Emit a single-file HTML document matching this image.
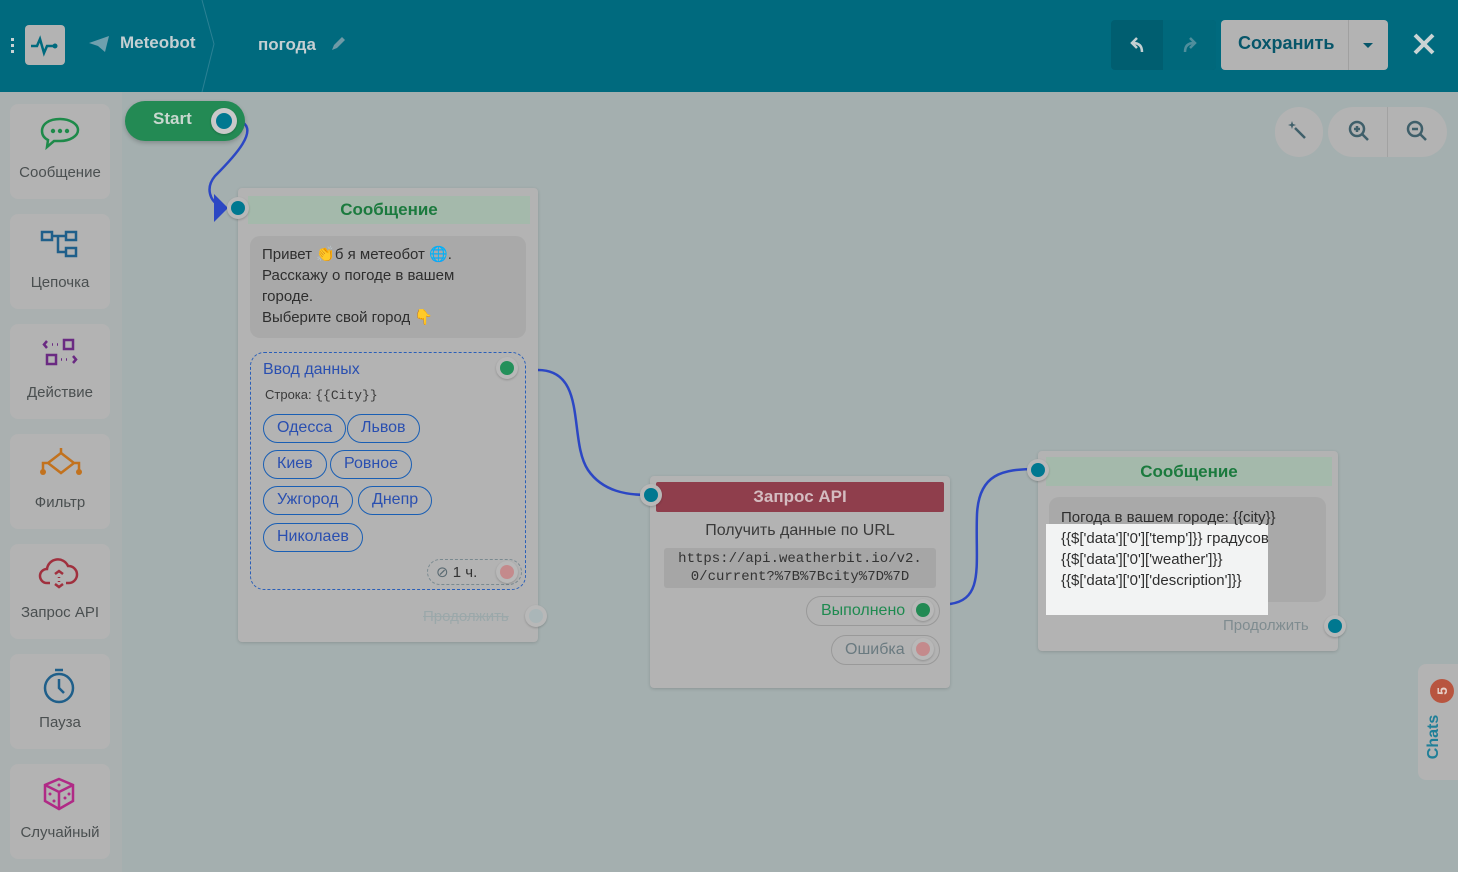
<!DOCTYPE html>
<html><head><meta charset="utf-8"><style>
*{box-sizing:border-box;margin:0;padding:0}
body{width:1458px;height:872px;overflow:hidden;background:#a4afaf;font-family:"Liberation Sans","DejaVu Sans",sans-serif;position:relative;color:#333}
.hdr{position:absolute;left:0;top:0;width:1458px;height:92px;background:#006a7e}
.side{position:absolute;left:0;top:92px;width:122px;height:780px;background:#aab0b0}
.card{position:absolute;left:10px;width:100px;height:95px;background:#b3b3b3;border-radius:8px;text-align:center;font-size:15px;color:#4a4f50}
.card svg{position:absolute;left:28px;top:12px}
.card span{position:absolute;left:0;right:0;top:60px}
.abs{position:absolute}
.node{position:absolute;background:#b3b3b3;border-radius:4px;box-shadow:0 1px 3px rgba(0,0,0,.15)}
.nh{position:absolute;text-align:center;font-weight:bold;font-size:17px}
.dot{position:absolute;width:22px;height:22px;border-radius:50%;background:#b8b8b8;box-shadow:0 1px 2px rgba(0,0,0,.2)}
.dot i{position:absolute;left:4px;top:4px;width:14px;height:14px;border-radius:50%}
.chip{position:absolute;height:29px;border:1.5px solid #1a5fb4;border-radius:15px;color:#2a4fb0;font-size:16px;line-height:26px;padding:0 13px}
</style></head><body>
<div class="hdr">
 <div class="abs" style="left:11px;top:38px;width:3px;height:3px;background:#c8d2d4;box-shadow:0 6px #c8d2d4,0 12px #c8d2d4"></div>
 <div class="abs" style="left:25px;top:25px;width:40px;height:40px;background:#b3b3b3;border-radius:4px">
  <svg width="40" height="40"><path d="M6 21h6l3-7 4 14 3-7h6" stroke="#006a7e" stroke-width="2.5" fill="none"/><circle cx="30" cy="21" r="2.5" fill="#006a7e"/></svg></div>
 <svg class="abs" style="left:88px;top:34px" width="22" height="20"><path d="M1 9L21 2 17 18 10 12z" fill="#6fa0ae"/></svg>
 <div class="abs" style="left:120px;top:33px;color:#c4cfd2;font-weight:bold;font-size:17px">Meteobot</div>
 <svg class="abs" style="left:200px;top:0" width="40" height="92"><path d="M2 0L14 44 2 92" stroke="#2b8194" fill="none"/></svg>
 <div class="abs" style="left:258px;top:35px;color:#c4cfd2;font-weight:bold;font-size:17px">погода</div>
 <svg class="abs" style="left:330px;top:36px" width="16" height="16"><path d="M2 14l2-5 8-8 3 3-8 8z" fill="#6f9aa6"/></svg>
 <div class="abs" style="left:1111px;top:20px;width:105px;height:50px;background:#005e70;border-radius:4px">
  <div class="abs" style="left:52px;top:0;width:53px;height:50px;background:#00687b;border-radius:0 4px 4px 0"></div>
  <svg class="abs" style="left:16px;top:13px" width="22" height="24"><path d="M15 19c0-6-3-9-9-9M10 5L5 10l5 5" stroke="#c4d0d2" stroke-width="2.5" fill="none"/></svg>
  <svg class="abs" style="left:68px;top:13px" width="22" height="24"><path d="M6 19c0-6 3-9 9-9M11 5l5 5-5 5" stroke="#4f8e9c" stroke-width="2.5" fill="none"/></svg>
 </div>
 <div class="abs" style="left:1221px;top:20px;width:167px;height:50px;background:#b3b3b3;border-radius:4px">
  <div class="abs" style="left:17px;top:13px;font-size:18px;font-weight:bold;color:#07566a">Сохранить</div>
  <div class="abs" style="left:127px;top:0;width:1px;height:50px;background:#a0a0a0"></div>
  <div class="abs" style="left:142px;top:23px;border:5px solid transparent;border-top:5px solid #07566a"></div>
 </div>
 <svg class="abs" style="left:1412px;top:32px" width="24" height="24"><path d="M3 3l18 18M21 3L3 21" stroke="#c9d3d4" stroke-width="4"/></svg>
</div>
<div class="side">
 <div class="card" style="top:12px"><svg width="44" height="36"><path d="M22 3C11 3 4 8 4 15c0 4 2 7 6 9l-1 7 7-6h6c10 0 18-5 18-11S32 3 22 3z" stroke="#1e8a4a" stroke-width="2.5" fill="none"/><circle cx="15" cy="15" r="2.2" fill="#1e8a4a"/><circle cx="22" cy="15" r="2.2" fill="#1e8a4a"/><circle cx="29" cy="15" r="2.2" fill="#1e8a4a"/></svg><span>Сообщение</span></div>
 <div class="card" style="top:122px"><svg width="44" height="36"><g stroke="#1f5f8a" stroke-width="2.5" fill="none"><rect x="4" y="6" width="10" height="8"/><rect x="28" y="6" width="10" height="8"/><rect x="28" y="22" width="10" height="8"/><path d="M14 10h14M20 10v16h8"/></g></svg><span>Цепочка</span></div>
 <div class="card" style="top:232px"><svg width="44" height="36"><g stroke="#6a2a82" stroke-width="2.5" fill="none"><rect x="26" y="4" width="9" height="9"/><rect x="9" y="19" width="9" height="9"/><path d="M9 5l-3 3.5 3 3.5M35 20l3 3.5-3 3.5M14 8.5h1M19 8.5h1M23 23.5h1M28 23.5h1"/></g></svg><span>Действие</span></div>
 <div class="card" style="top:342px"><svg width="46" height="36"><g stroke="#c2721e" stroke-width="2.5" fill="none"><path d="M23 2v5M23 7L10 17l13 10 13-10zM10 17H5v8M36 17h5v8"/></g><circle cx="5" cy="26" r="3" fill="#c2721e"/><circle cx="41" cy="26" r="3" fill="#c2721e"/></svg><span>Фильтр</span></div>
 <div class="card" style="top:452px"><svg width="44" height="38"><g stroke="#a0303e" stroke-width="2.5" fill="none"><path d="M12 27H9a7 7 0 010-14 11 11 0 0121-3 8 8 0 011 17h-3"/><path d="M17 18l4-3 4 3M17 28l4 3 4-3M21 21v1M21 25v1"/></g></svg><span>Запрос API</span></div>
 <div class="card" style="top:562px"><svg width="44" height="38"><g stroke="#1f5f8a" stroke-width="2.5" fill="none"><circle cx="21" cy="22" r="14"/><path d="M21 13v9l5 5M17 4h8"/></g></svg><span>Пауза</span></div>
 <div class="card" style="top:672px"><svg width="44" height="38"><g stroke="#b02a86" stroke-width="2.5" fill="none"><path d="M21 3l14 6v16l-14 8-14-8V9z M7 9l14 7 14-7M21 16v17"/></g><circle cx="21" cy="9" r="1.5" fill="#b02a86"/><circle cx="12" cy="18" r="1.5" fill="#b02a86"/><circle cx="16" cy="25" r="1.5" fill="#b02a86"/><circle cx="27" cy="22" r="1.5" fill="#b02a86"/><circle cx="31" cy="18" r="1.5" fill="#b02a86"/></svg><span>Случайный</span></div>
</div>
<svg class="abs" style="left:0;top:0" width="1458" height="872"><g stroke="#2c47c4" stroke-width="2.5" fill="none">
<path d="M240 121c20 8-5 35-25 55-10 12-5 25 5 30"/>
<path d="M538 370c50 0 30 70 50 100 15 22 40 25 60 25"/>
<path d="M950 604c35-5 25-40 27-90 2-40 25-45 60-45"/></g>
<path d="M214 194l14 14-14 14z" fill="#2c47c4"/></svg>
<div class="abs" style="left:125px;top:101px;width:120px;height:40px;background:#238a54;border-radius:20px;box-shadow:0 2px 4px rgba(0,0,0,.2)">
 <div class="abs" style="left:28px;top:8px;color:#c8d8cf;font-weight:bold;font-size:17px">Start</div>
 <div class="dot" style="left:86px;top:7px;width:26px;height:26px;background:#c9c9c9"><i style="left:5px;top:5px;width:16px;height:16px;background:#007890"></i></div>
</div>
<div class="abs" style="left:1275px;top:107px;width:48px;height:50px;border-radius:25px;background:#b3b3b3">
 <svg class="abs" style="left:12px;top:13px" width="24" height="24"><path d="M8 8l10 10" stroke="#3f5f6a" stroke-width="2.5"/><path d="M5 1l1 3 3 1-3 1-1 3-1-3-3-1 3-1z" fill="#3f5f6a"/></svg></div>
<div class="abs" style="left:1328px;top:107px;width:119px;height:50px;border-radius:25px;background:#b3b3b3">
 <div class="abs" style="left:59px;top:0;width:1px;height:50px;background:#a2a2a2"></div>
 <svg class="abs" style="left:20px;top:13px" width="24" height="24"><circle cx="9" cy="9" r="7" stroke="#3f5f6a" stroke-width="2.5" fill="none"/><path d="M14 14l6 6M6 9h6M9 6v6" stroke="#3f5f6a" stroke-width="2.5"/></svg>
 <svg class="abs" style="left:78px;top:13px" width="24" height="24"><circle cx="9" cy="9" r="7" stroke="#3f5f6a" stroke-width="2.5" fill="none"/><path d="M14 14l6 6M6 9h6" stroke="#3f5f6a" stroke-width="2.5"/></svg>
</div>
<div class="node" style="left:238px;top:188px;width:300px;height:454px">
 <div class="nh" style="left:10px;top:8px;width:282px;height:28px;background:#a4b9ab;color:#1b7a3e;line-height:28px">Сообщение</div>
 <div class="abs" style="left:12px;top:48px;width:276px;height:102px;background:#a9a9a9;border-radius:10px;padding:8px 12px;font-size:15px;line-height:21px;color:#2e2e2e;white-space:nowrap">Привет 👏б я метеобот 🌐.<br>Расскажу о погоде в вашем<br>городе.<br>Выберите свой город 👇</div>
 <div class="abs" style="left:12px;top:164px;width:276px;height:238px;border:1.5px dashed #2a5fb8;border-radius:14px">
  <div class="abs" style="left:12px;top:8px;color:#2a4fb0;font-size:16px">Ввод данных</div>
  <div class="abs" style="left:14px;top:34px;font-size:13px;color:#3a3a3a">Строка: <span style="font-family:'Liberation Mono',monospace">{{City}}</span></div>
  <div class="chip" style="left:12px;top:61px">Одесса</div>
  <div class="chip" style="left:96px;top:61px">Львов</div>
  <div class="chip" style="left:12px;top:97px">Киев</div>
  <div class="chip" style="left:79px;top:97px">Ровное</div>
  <div class="chip" style="left:12px;top:133px">Ужгород</div>
  <div class="chip" style="left:107px;top:133px">Днепр</div>
  <div class="chip" style="left:12px;top:170px">Николаев</div>
  <div class="abs" style="left:176px;top:206px;width:95px;height:26px;border:1px dashed #7a8a90;border-radius:13px;font-size:15px;color:#333;padding:3px 0 0 8px"><span style="color:#5a6a72">⊘</span> 1 ч.</div>
  <div class="dot" style="left:245px;top:208px"><i style="background:#c48a8c"></i></div>
  <div class="dot" style="left:245px;top:4px"><i style="background:#23905a"></i></div>
 </div>
 <div class="abs" style="left:185px;top:420px;font-size:15px;color:#9ba8aa;text-decoration:line-through">Продолжить</div>
 <div class="dot" style="left:287px;top:417px"><i style="background:#aab6b8"></i></div>
</div>
<div class="dot" style="left:227px;top:197px"><i style="background:#007890"></i></div>
<div class="node" style="left:650px;top:476px;width:300px;height:212px">
 <div class="nh" style="left:6px;top:6px;width:288px;height:30px;background:#8f3e4c;color:#d4bcc0;line-height:30px;border-radius:2px">Запрос API</div>
 <div class="abs" style="left:0;width:300px;top:46px;text-align:center;font-size:16px;color:#3a3a3a">Получить данные по URL</div>
 <div class="abs" style="left:14px;top:72px;width:272px;height:40px;background:#a6a6a6;border-radius:3px;font-family:'Liberation Mono',monospace;font-size:14px;color:#333;text-align:center;line-height:18px;padding-top:2px">https://api.weatherbit.io/v2.<br>0/current?%7B%7Bcity%7D%7D</div>
 <div class="abs" style="left:156px;top:120px;width:134px;height:30px;border:1px solid #999;border-radius:15px;font-size:16px;color:#1f8a50;padding:5px 0 0 14px">Выполнено</div>
 <div class="dot" style="left:262px;top:123px"><i style="background:#238a54"></i></div>
 <div class="abs" style="left:181px;top:159px;width:109px;height:30px;border:1px solid #999;border-radius:15px;font-size:16px;color:#6a7a80;padding:5px 0 0 13px">Ошибка</div>
 <div class="dot" style="left:262px;top:162px"><i style="background:#c48a8c"></i></div>
</div>
<div class="dot" style="left:640px;top:484px"><i style="background:#007890"></i></div>
<div class="node" style="left:1038px;top:451px;width:300px;height:200px">
 <div class="nh" style="left:8px;top:6px;width:286px;height:29px;background:#a4b9ab;color:#1b7a3e;line-height:29px">Сообщение</div>
 <div class="abs" style="left:11px;top:46px;width:277px;height:105px;background:#a9a9a9;border-radius:10px"></div>
 <div class="abs" style="left:8px;top:73px;width:222px;height:91px;background:#f2f3f3"></div>
 <div class="abs" style="left:23px;top:56px;font-size:15px;line-height:21px;color:#2e2e2e;white-space:nowrap">Погода в вашем городе: {{city}}<br>{{$['data']['0']['temp']}} градусов<br>{{$['data']['0']['weather']}}<br>{{$['data']['0']['description']}}</div>
 <div class="abs" style="left:185px;top:166px;font-size:15px;color:#7f8c90">Продолжить</div>
 <div class="dot" style="left:286px;top:164px"><i style="background:#007890"></i></div>
</div>
<div class="dot" style="left:1027px;top:459px"><i style="background:#007890"></i></div>
<div class="abs" style="left:1418px;top:664px;width:40px;height:116px;background:#b3b3b3;border-radius:8px 0 0 8px">
 <div class="abs" style="left:12px;top:15px;width:24px;height:24px;border-radius:50%;background:#b8553f;color:#e6d0c8;font-weight:bold;font-size:14px;text-align:center;line-height:24px;transform:rotate(-90deg)">5</div>
 <div class="abs" style="left:-6px;top:64px;transform:rotate(-90deg);color:#1f7f98;font-weight:bold;font-size:16px">Chats</div>
</div>
</body></html>
